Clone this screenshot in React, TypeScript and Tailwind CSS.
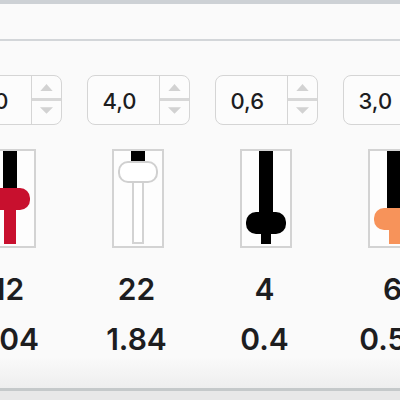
import React from "react";

type Col = {
  box: string;
  upper: number;
  lower: string;
  lowerBorder?: boolean;
  knob: string;
  knobBorder?: boolean;
  lowerW: number;
  n1: string;
  n2: string;
};

const cols: Col[] = [
  { box: "2,0", upper: 37, knob: "bg-[#c8102e]", lower: "bg-[#c8102e]", lowerW: 12, n1: "12", n2: "1.04" },
  { box: "4,0", upper: 10, knob: "bg-white", knobBorder: true, lower: "bg-white", lowerBorder: true, lowerW: 12, n1: "22", n2: "1.84" },
  { box: "0,6", upper: 61, knob: "bg-black", lower: "bg-black", lowerW: 10, n1: "4", n2: "0.4" },
  { box: "3,0", upper: 57, knob: "bg-[#f7935a]", lower: "bg-[#f7935a]", lowerW: 11, n1: "6", n2: "0.56" },
];

function SpinBox({ value }: { value: string }) {
  return (
    <div className="flex h-[50px] w-[103px] rounded-[8px] border-[1.5px] border-[#d5d5d5] bg-[#fcfcfc]">
      <div className="flex flex-1 items-center pl-[15px] pt-[3px] text-[22px] font-medium text-[#1d1d1f]">
        {value}
      </div>
      <div className="flex w-[30px] flex-col border-l-[1.5px] border-[#d5d5d5]">
        <div className="flex flex-1 items-center justify-center pt-[2px]">
          <svg width="13" height="7" viewBox="0 0 14 8">
            <path d="M7 0 L14 8 L0 8 Z" fill="#d2d2d2" />
          </svg>
        </div>
        <div className="h-[3px] bg-[#d8d8d8]" />
        <div className="flex flex-1 items-center justify-center pb-[4px]">
          <svg width="13" height="7" viewBox="0 0 14 7">
            <path d="M0 0 L14 0 L7 7 Z" fill="#d2d2d2" />
          </svg>
        </div>
      </div>
    </div>
  );
}

function Slider({ c }: { c: Col }) {
  return (
    <div className="flex h-[99px] w-[52px] flex-col items-center border-2 border-[#d3d3d3] bg-[#fdfdfd] pb-[2px]">
      <div className="w-[14px] shrink-0 bg-black" style={{ height: c.upper }} />
      <div
        className={`h-[22px] w-[40px] shrink-0 rounded-[10px] ${c.knob} ${
          c.knobBorder ? "border-2 border-[#d0d0d0]" : ""
        }`}
      />
      <div
        className={`flex-1 ${c.lower} ${c.lowerBorder ? "border-2 border-t-0 border-[#d3d3d3]" : ""}`}
        style={{ width: c.lowerW }}
      />
    </div>
  );
}

export default function App() {
  return (
    <div
      className="relative h-[400px] w-[400px] overflow-hidden bg-[#fafafa] text-[#1d1d1f]"
      style={{ fontFamily: "Inter, 'Liberation Sans', sans-serif" }}
    >
      <div className="h-[4px] bg-[#cdd1d5]" />
      <div className="h-[35px]" />
      <div className="h-[2px] bg-[#d3d6d9]" />
      <div className="h-[34px]" />
      <div className="ml-[-54px] flex">
        {cols.map((c, i) => (
          <div key={i} className="flex w-[128px] shrink-0 flex-col items-center">
            <SpinBox value={c.box} />
            <div className="h-[24px]" />
            <Slider c={c} />
            <div className="h-[23px]" />
            <div className="mr-[3px] h-[36px] text-[30px] font-semibold leading-[36px]">{c.n1}</div>
            <div className="h-[14px]" />
            <div className="mr-[3px] h-[36px] text-[30px] font-semibold leading-[36px]">{c.n2}</div>
          </div>
        ))}
      </div>
      <div className="h-[31px] bg-gradient-to-b from-[#fafafa] to-[#eeeeee]" />
      <div className="h-[3px] bg-[#c5c9ca]" />
      <div className="h-[20px] bg-[#e8e8e8]" />
    </div>
  );
}
